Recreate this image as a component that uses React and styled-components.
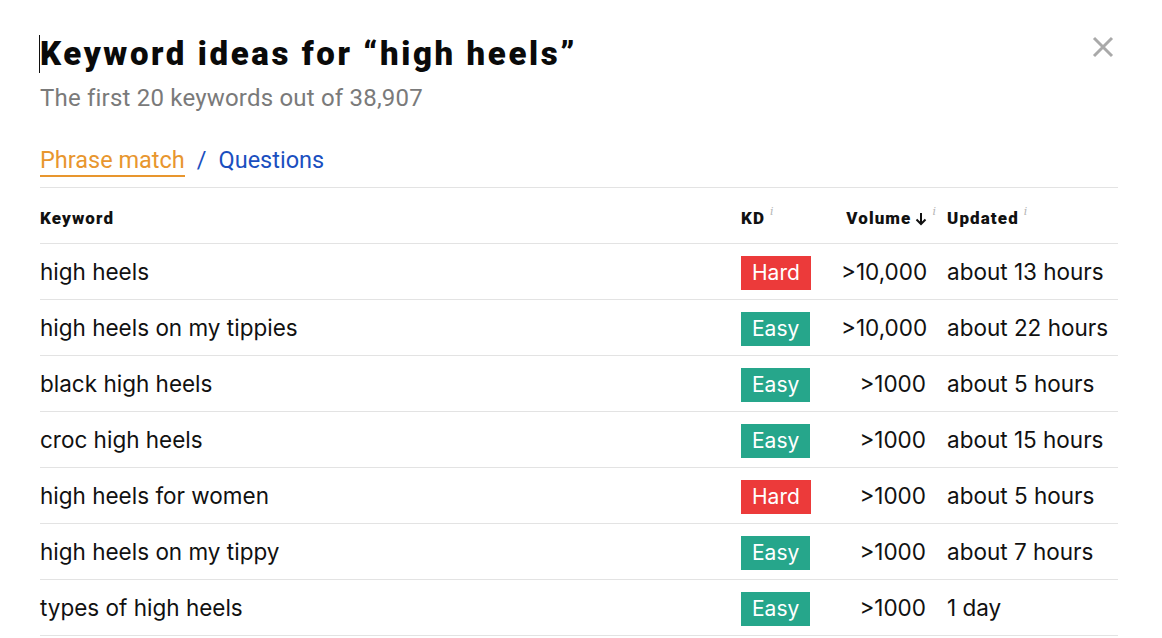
import styled, { createGlobalStyle } from "styled-components";

const GlobalStyle = createGlobalStyle`
  html, body {
    margin: 0;
    padding: 0;
    background: #fff;
  }
  body {
    font-family: Inter, "Noto Sans", sans-serif;
    color: #111;
  }
`;

const Modal = styled.div`
  position: relative;
  padding: 30px 44px 0 40px;
`;

const Caret = styled.span`
  position: absolute;
  left: -1px;
  top: 5px;
  width: 1px;
  height: 38px;
  background: #111;
`;

const Title = styled.h1`
  position: relative;
  margin: 0;
  font-family: Roboto, "Liberation Sans", sans-serif;
  font-weight: 900;
  font-size: 33px;
  line-height: 48px;
  letter-spacing: 2.6px;
  color: #0a0a0a;
`;

const Subtitle = styled.p`
  margin: 6px 0 0;
  font-family: Roboto, "Liberation Sans", sans-serif;
  font-size: 24px;
  line-height: 28px;
  letter-spacing: 0.2px;
  color: #7a7a7a;
`;

const Close = styled.button`
  position: absolute;
  top: 35px;
  right: 47px;
  width: 24px;
  height: 24px;
  padding: 0;
  border: 0;
  background: none;
  cursor: pointer;
`;

const Tabs = styled.div`
  display: flex;
  align-items: flex-start;
  gap: 12px;
  margin-top: 34px;
  padding-bottom: 10px;
  border-bottom: 1px solid #e3e3e3;
  font-family: Roboto, "Liberation Sans", sans-serif;
  font-size: 23.5px;
  line-height: 28px;
`;

const Tab = styled.span`
  color: ${(p) => (p.$active ? "#e8962e" : "#1a4fbf")};
  padding-bottom: ${(p) => (p.$active ? "1px" : "0")};
  border-bottom: ${(p) => (p.$active ? "2px solid #e8962e" : "none")};
`;

const Slash = styled.span`
  color: #1a4fbf;
`;

const Row = styled.div`
  display: grid;
  grid-template-columns: 1fr 100px 95px 182px;
  align-items: center;
  height: 55px;
  border-bottom: 1px solid #e3e3e3;
`;

const HeadRow = styled(Row)`
  padding-top: 4px;
  height: 51px;
`;

const HeadCell = styled.div`
  font-family: Roboto, "Liberation Sans", sans-serif;
  font-weight: 900;
  font-size: 17px;
  letter-spacing: 1.1px;
  color: #111;
  padding-left: ${(p) => p.$pl || 0}px;
  display: flex;
  justify-content: ${(p) => (p.$right ? "flex-end" : "flex-start")};
  align-items: center;
`;

const Info = styled.sup`
  font-family: "DejaVu Serif", serif;
  font-style: italic;
  font-weight: 400;
  font-size: 11px;
  letter-spacing: 0;
  color: #b5b5b5;
  margin-left: 5px;
  position: relative;
  top: -6px;
`;

const Arrow = styled.svg`
  margin-left: 4px;
  margin-top: 3px;
`;

const Cell = styled.div`
  font-size: 22.5px;
  color: #111;
  white-space: nowrap;
  text-align: ${(p) => (p.$right ? "right" : "left")};
  padding-left: ${(p) => p.$pl || 0}px;
  padding-right: ${(p) => p.$pr || 0}px;
`;

const Badge = styled.span`
  display: inline-block;
  height: 34px;
  line-height: 34px;
  margin-top: 2px;
  padding: 0 11px;
  font-size: 21px;
  color: #fff;
  background: ${(p) => (p.$hard ? "#ec3a3a" : "#26a68b")};
`;

const rows = [
  ["high heels", "Hard", ">10,000", "about 13 hours"],
  ["high heels on my tippies", "Easy", ">10,000", "about 22 hours"],
  ["black high heels", "Easy", ">1000", "about 5 hours"],
  ["croc high heels", "Easy", ">1000", "about 15 hours"],
  ["high heels for women", "Hard", ">1000", "about 5 hours"],
  ["high heels on my tippy", "Easy", ">1000", "about 7 hours"],
  ["types of high heels", "Easy", ">1000", "1 day"],
];

export default function App() {
  return (
    <>
      <GlobalStyle />
      <Modal>
        <Title>
          <Caret />
          Keyword ideas for “high heels”
        </Title>
        <Subtitle>The first 20 keywords out of 38,907</Subtitle>
        <Close aria-label="Close">
          <svg width="24" height="24" viewBox="0 0 24 24">
            <path d="M3 3 L21 21 M21 3 L3 21" stroke="#a9a9a9" strokeWidth="3" fill="none" />
          </svg>
        </Close>
        <Tabs>
          <Tab $active>Phrase match</Tab>
          <Slash>/</Slash>
          <Tab>Questions</Tab>
        </Tabs>
        <HeadRow>
          <HeadCell>Keyword</HeadCell>
          <HeadCell>
            KD<Info>i</Info>
          </HeadCell>
          <HeadCell $right>
            Volume
            <Arrow width="12" height="14" viewBox="0 0 12 14">
              <path d="M6 1 V12 M1.5 7.5 L6 12 L10.5 7.5" stroke="#111" strokeWidth="2" fill="none" />
            </Arrow>
            <Info>i</Info>
          </HeadCell>
          <HeadCell $pl={11}>
            Updated<Info>i</Info>
          </HeadCell>
        </HeadRow>
        {rows.map(([kw, kd, vol, upd]) => (
          <Row key={kw}>
            <Cell>{kw}</Cell>
            <Cell>
              <Badge $hard={kd === "Hard"}>{kd}</Badge>
            </Cell>
            <Cell $right $pr={10}>
              {vol}
            </Cell>
            <Cell $pl={11}>{upd}</Cell>
          </Row>
        ))}
      </Modal>
    </>
  );
}
